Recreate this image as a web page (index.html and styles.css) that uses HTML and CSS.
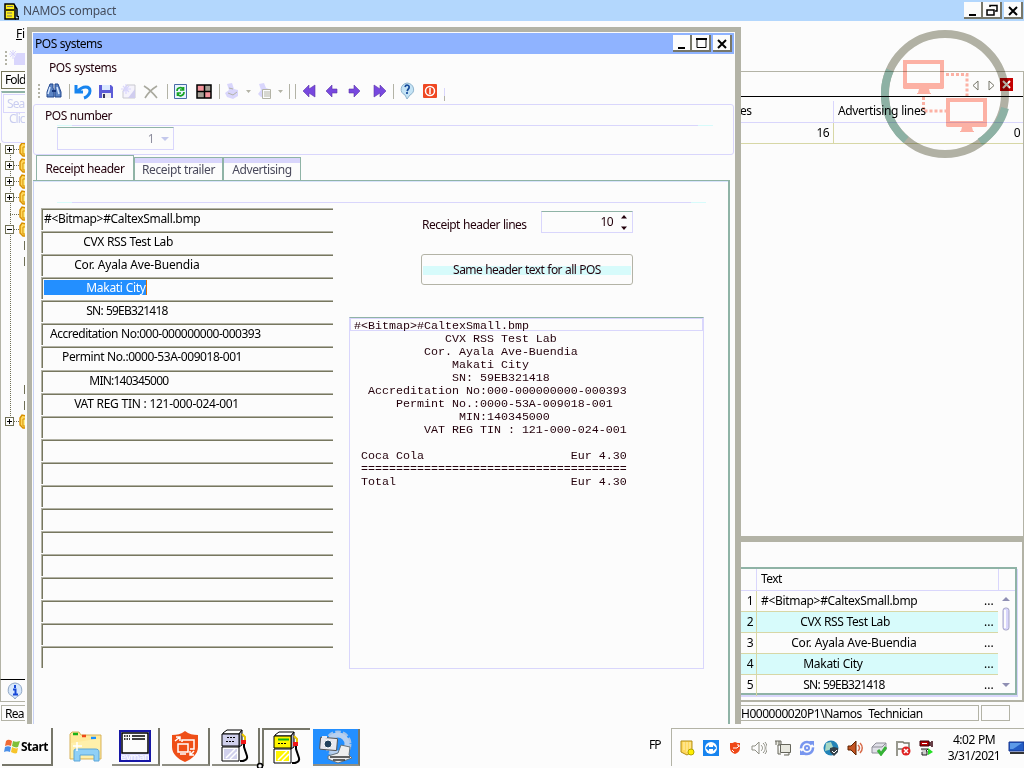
FILE: index.html
```html
<!DOCTYPE html>
<html lang="en">
<head>
<meta charset="utf-8">
<title>NAMOS compact</title>
<link rel="stylesheet" href="styles.css">
</head>
<body>
<svg class="defs" width="0" height="0">
  <defs>
    <g id="min"><path d="M5 13h7" stroke="#000" stroke-width="2"/></g>
    <g id="cls"><path d="M5 5l8 8M13 5l-8 8" stroke="#000" stroke-width="2"/></g>
    <g id="folder"><path d="M7 2 3 1 1 4v7l3 3h3z" fill="#ffd75c" stroke="#d78f00" stroke-width="1.4"/><path d="M7 5H4v7h3" fill="#fff38f" stroke="#d78f00"/></g>
    <g id="pump">
      <path d="M3 4 7 1h15l-3 4H3z" fill="#fff" stroke="#000"/>
      <path d="M19 5l3-4v15l-3 2z" fill="#b3b3c4" stroke="#000"/>
      <path d="M2 5h17v12H2z" stroke="#000"/>
      <path d="M2 18h17v14H2z" fill="#fff" stroke="#000"/>
      <path d="M4 20h13v10H4z"/><path d="M6 29l9-9M10 30l7-7" stroke="#fff" stroke-width="1.500"/>
      <path d="M7 8.500h9M6 12.500h9" stroke="#000" stroke-dasharray="2 1"/>
      <path d="M24 14v4l3 9c1 4-2 4-4 5h-3" fill="none" stroke="#000" stroke-width="2"/>
      <path d="M22 5l3 3v4h-2" fill="none" stroke="#e8c400" stroke-width="2"/>
      <path d="M21 11h5v4h-5z" fill="#ef1717"/>
    </g>
    <g id="monitor"><rect x="2" y="2" width="37" height="23" fill="none" stroke="#ffb3a6" stroke-width="4"/><path d="M0 23h41v5l-1 1H26l1 4h1v1H14v-1h1l1-4H1l-1-1z" fill="#ffb3a6"/></g>
  </defs>
</svg>
<div class="desktop">
  <header class="titlebar">
    <svg width="16" height="18"><path d="M2 2h9l1 2v13H2zM3 8h8" fill="#ffef17" stroke="#000" stroke-width="1.5"/><path d="M12 4l2 3v7l2 1v2h-4" fill="none" stroke="#000" stroke-width="1.5"/><path d="M4 4.500h6M4 11h5M4 14h5" stroke="#777"/></svg>
    <span class="grow app-title">NAMOS compact</span>
    <span class="winbtns">
      <svg class="wb"><use href="#min"/></svg>
      <svg class="wb"><path d="M7 5V3.500h7V9h-2M4 8h7v5H4z" fill="none" stroke="#000" stroke-width="1.500"/></svg>
      <svg class="wb gap"><use href="#cls"/></svg>
    </span>
  </header>

  <main class="workspace">
    <aside class="side">
      <div class="menu"><u>F</u>i</div>
      <div class="sidetool"><svg width="20" height="16"><path d="M1 1v14" stroke="#b3b3a6" stroke-width="2" stroke-dasharray="2 2"/><path d="M12 3h9v12H9V8z" fill="#d9d6fc"/><path d="M8 0v9M4 4h9M5 1l6 6M11 1 5 7" stroke="#d9d6fc"/></svg></div>
      <div class="foldtab">Fold</div>
      <div class="search"><div class="searchbox">Sea</div><div class="searchhint">Clic</div></div>
      <svg class="tree" width="25" height="536">
        <path d="M9.500 10v273M9 71.500h10M13 6.500h6M13 22.500h6M13 38.500h6M13 54.500h6M13 86.500h6M13 278.500h6" fill="none" stroke="#6f6f55" stroke-dasharray="1 1"/>
        <g fill="#fcfcfc" stroke="#6f6f55"><rect x="4.500" y="2.500" width="8" height="8"/><rect x="4.500" y="18.500" width="8" height="8"/><rect x="4.500" y="34.500" width="8" height="8"/><rect x="4.500" y="50.500" width="8" height="8"/><rect x="4.500" y="82.500" width="8" height="8"/><rect x="4.500" y="274.500" width="8" height="8"/></g>
        <path d="M6 6.500h5M8.500 4v5M6 22.500h5M8.500 20v5M6 38.500h5M8.500 36v5M6 54.500h5M8.500 52v5M6 86.500h5M6 278.500h5M8.500 276v5" stroke="#000"/>
        <g transform="translate(18)"><use href="#folder" y="-1"/><use href="#folder" y="15"/><use href="#folder" y="31"/><use href="#folder" y="47"/><use href="#folder" y="63"/><use href="#folder" y="79"/><use href="#folder" y="271"/></g>
        <path d="M23.500 98v9M23.500 114v9M23.500 242v9M23.500 258v9" stroke="#6f6f55"/>
      </svg>
      <div class="info"><svg width="18" height="18"><path d="M9 1a7.500 7 0 0 1 2 13.500L9 17l-2-2.500A7.500 7 0 0 1 9 1z" fill="#d7e8fc" stroke="#8fa6c4"/><path d="M9 3v3M7 7.500h2.500V12M7 12.500h5" stroke="#1748d7" stroke-width="2" fill="none"/></svg></div>
      <div class="ready">Rea</div>
    </aside>
    <section class="right">
      <div class="upper">
        <div class="tabstrip">
          <svg width="44" height="14"><path d="M9 3v9L4 7.500zM20 3v9l5-4.500z" fill="#fcfcfc" stroke="#77776a"/><path d="M31 0h13v13H31z" fill="#c40000"/><path d="M34 3l7 7M41 3l-7 7" stroke="#fff" stroke-width="2"/></svg>
        </div>
        <div class="ghead"><span class="c1">es</span><span class="adv">Advertising lines</span></div>
        <div class="grow1"><span class="c1">16</span><span class="c2">0</span></div>
      </div>
      <div class="lower">
        <div class="textgrid">
          <div class="rows">
            <div class="r h"><span class="n"></span><span class="t">Text</span></div>
            <div class="r"><span class="n">1</span><span class="t wide">#&lt;Bitmap&gt;#CaltexSmall.bmp</span><i>...</i></div>
            <div class="r alt"><span class="n">2</span><span class="t k20">             CVX RSS Test Lab</span><i>...</i></div>
            <div class="r"><span class="n">3</span><span class="t k40">          Cor. Ayala Ave-Buendia</span><i>...</i></div>
            <div class="r alt"><span class="n">4</span><span class="t k30">              Makati City</span><i>...</i></div>
            <div class="r"><span class="n">5</span><span class="t kneg">              SN: 59EB321418</span><i>...</i></div>
          </div>
          <div class="scroll"><div class="sc-top"></div><svg width="16" height="103"><path d="M4 10l4-4 4 4zM4 92h8l-4 4z" fill="#8f8fb3"/><rect x="5" y="17" width="6" height="22" rx="2.500" fill="#d9d6fc" stroke="#a6a6c4"/><path d="M7 19v18" stroke="#fcfcfc" stroke-width="2"/></svg></div>
        </div>
      </div>
      <div class="status"><span class="s1">H000000020P1\Namos&nbsp; Technician</span><span class="s2"></span></div>
    </section>
  </main>

  <footer class="taskbar">
    <div class="start"><svg width="17" height="16"><path d="M2 3c2-2 4-1 6 0L7 8C5 7 3 7 1 8z" fill="#ef6a35"/><path d="M9 3c2 1 4 1 7 0l-2 6c-2 1-4 0-6-1z" fill="#7fbf3a"/><path d="M1 9c2-1 4-1 6 0l-1 5c-2-1-4-1-6 0z" fill="#4a8fe8"/><path d="M8 9c2 1 4 2 6 1l-1 5c-2 1-4 0-6-1z" fill="#f7c52c"/></svg><b>Start</b></div>
    <div class="apps">
      <div class="app"><svg width="34" height="32"><path d="M1 3l2-2h7l2 3h20v24H1z" fill="#ffe99a" stroke="#d7b35c"/><path d="M4 3h5" stroke="#17b317" stroke-width="2.500"/><path d="M13 5h4" stroke="#ef4817" stroke-width="2.500"/><path d="M22 7h5" stroke="#178fff" stroke-width="2.500"/><path d="M2 27V12L27 8h4v19z" fill="#fff0ab"/><path d="M5 30V20c0-2 1-2 3-2h18c3 0 4 1 4 3v9h-5v-6H11v6z" fill="#8fd0f7" stroke="#5ca6d7"/><path d="M4 15h9M8 11v9" stroke="#fff" stroke-width="1.500"/></svg></div>
      <div class="app btn"><svg width="32" height="32"><path d="M1 1h30v30H1z" fill="#d9d9ff" stroke="#1717a6" stroke-width="2"/><path d="M3 3h26v20H3z" fill="#fcfcfc" stroke="#000" stroke-width="1.500"/><path d="M13 6h13M13 9h13" stroke="#000" stroke-width="1.500"/><path d="M5 6h6M5 9h6" stroke="#000" stroke-width="1.500" stroke-dasharray="1.500 1"/><text x="1.500" y="30" class="evman">evman</text></svg></div>
      <div class="app btn"><svg width="28" height="32"><path d="M14 1c4 3 8 4 13 4v12c0 7-6 12-13 15C7 29 1 24 1 17V5c5 0 9-1 13-4z" fill="#ef4f17"/><g fill="none" stroke="#fff" stroke-width="1.500"><path d="M7 14h10v8H7zM9 24h6"/><path d="M11 12v-2h12v9h-4M4 11l5-4M5 7h4v4M23 21l-4 4M19 21v4h4"/></g></svg></div>
      <div class="app btn"><svg width="30" height="34" fill="#d0d0ec"><use href="#pump"/></svg></div>
      <div class="app pressed"><svg width="30" height="34" fill="#fff500"><use href="#pump"/><path d="M6 8.500h11" stroke="#17b317" stroke-width="2"/></svg></div>
      <div class="app btn sel"><svg width="36" height="34"><circle cx="20" cy="14" r="11" fill="none" stroke="#a6c4e8" stroke-width="5" stroke-dasharray="5 2"/><circle cx="20" cy="14" r="9" fill="none" stroke="#b8d0ef" stroke-width="5"/><rect x="2" y="8" width="17" height="12" rx="1" fill="#e8e8ef" stroke="#555" transform="rotate(5 12 15)"/><circle cx="10" cy="14" r="4" fill="#23415c" stroke="#fff"/><path d="M4 6h5v2H4z" fill="#e8e8ef"/><path d="M10 26l10-3 3-8 9 2-1 8 3 3-14 5-10-4z" fill="#eee" stroke="#66737c"/><path d="M12 27h20M15 30h12" stroke="#333" stroke-width="1.500"/></svg></div>
    </div>
    <span class="lang">FP</span>
    <div class="tray">
      <svg width="16" height="16"><path d="M2 1h11v11l-5 3-6-3z" fill="#ffd75c" stroke="#b38f17"/><path d="M5 2v8M8 2v10M11 2v8" stroke="#fff3b3"/><circle cx="12" cy="12" r="3" fill="#ffef00" stroke="#b3a600"/></svg>
      <svg width="16" height="16"><rect width="16" height="16" fill="#1784ef"/><circle cx="8" cy="8" r="6" fill="#fff"/><path d="M2.500 8 6 5v2h4V5l3.500 3-3.500 3V9H6v2z" fill="#1784ef"/></svg>
      <svg width="16" height="16"><path d="M8 2c2 1 3 1 5 1v5c0 3-2 5-5 6-3-1-5-3-5-6V3c2 0 3 0 5-1z" fill="#ef4817"/><path d="M6 8h4l2-2M10 5h2v2M5 10l2 2" stroke="#fff" fill="none"/></svg>
      <svg width="16" height="16" fill="none" stroke="#8f8f84"><path d="M1 6h3l4-4v12l-4-4H1z"/><path d="M10 5c2 2 2 4 0 6M12 3c3 3 3 7 0 10M14 2c3 4 3 8 0 12"/></svg>
      <svg width="16" height="16" fill="#e8e8df" stroke="#66665c"><path d="M5.500 4.500h10v8h-10zM9 15h5v-2M0 1h6v4H3v9h3"/><path d="M1 1v4M4 1v4"/></svg>
      <svg width="16" height="16"><circle cx="8" cy="8" r="6" fill="none" stroke="#7896ef" stroke-width="2.500" stroke-dasharray="15 3"/><circle cx="8" cy="8" r="2" fill="none" stroke="#7896ef" stroke-width="2"/><path d="M10 1h5v5zM6 15H1v-5z" fill="#7896ef"/></svg>
      <svg width="16" height="16"><circle cx="8" cy="8" r="7.500" fill="#2384b8"/><path d="M3 3l5-1 2 5-4 3-4 1z" fill="#a6d7c4"/><path d="M7 8l4-1 4 1v4l-4 4-4-4z" fill="#33414a"/><path d="M9 11l2 2 3-3" stroke="#fff" fill="none"/></svg>
      <svg width="16" height="16"><path d="M1 6h3l5-5v14l-5-5H1z" fill="#c45523" stroke="#5c2300"/><path d="M11 5c2 2 2 4 0 6M13 3c3 3 3 7 0 10" stroke="#d76a48" stroke-width="1.500" fill="none"/></svg>
      <svg width="16" height="16"><path d="M1 7l4-4h10v7l-4 3H1z" fill="#e0e0e8" stroke="#8f8f99"/><path d="M1 7h10l4-4" stroke="#8f8f99" fill="none"/><path d="M7 10l3 4 5-7" stroke="#35b335" stroke-width="3" fill="none"/></svg>
      <svg width="16" height="16"><path d="M2 1v15M3 2h5l1 1h5v8H9L8 9H3" fill="#fcfcfc" stroke="#77776a" stroke-width="1.500"/><circle cx="11" cy="11" r="4.500" fill="#df2323"/><path d="M9 9l4 4M13 9l-4 4" stroke="#fff" stroke-width="1.500"/></svg>
      <svg width="16" height="16"><path d="M1 1h9v5H1z" fill="#b30000" stroke="#35000b"/><path d="M3 3.500h5" stroke="#fff"/><path d="M11 2v4M13 1v6" stroke="#35000b" stroke-width="1.500"/><path d="M2 9h7l-2 2h1v4H3v-3" fill="#ccc" stroke="#222"/><path d="M9 8l5 4-5 3z" fill="#23df23"/></svg>
      <div class="clock"><span>4:02 PM</span><span>3/31/2021</span></div>
      <svg width="16" height="14"><path d="M1 1h15v9H1z" fill="#235cc4" stroke="#17358f"/><path d="M2 2h12L5 8H2z" fill="#5c9ae8"/><path d="M2 12h14" stroke="#333" stroke-width="2"/></svg>
    </div>
  </footer>

  <section class="dialog">
    <div class="dtitle"><span class="grow">POS systems</span>
      <span class="winbtns"><svg class="wb"><use href="#min"/></svg><svg class="wb"><path d="M5 4.500h9v8H5z" fill="none" stroke="#000"/><path d="M4 4h11" stroke="#000" stroke-width="2"/></svg><svg class="wb gap"><use href="#cls"/></svg></span>
    </div>
    <div class="dmenu">POS systems</div>
    <svg class="toolbar" width="420" height="24">
      <path d="M6 3v14" stroke="#b3b3a6" stroke-width="2" stroke-dasharray="2 2"/>
      <g transform="translate(13,3)"><path d="M4 0h3v4l1 2v7H1V8zM9 0h3l3 8v5H9V6z" fill="#5c84c4" stroke="#23488f"/><path d="M4 3 2 10M11 3l2 7" stroke="#d7e8ff" stroke-width="1.500"/><path d="M6 7h4" stroke="#17357a" stroke-width="2"/></g>
      <path d="M36.500 3v15M134.500 3v15M186.500 3v15M256.500 3v15M262.500 3v15M360.500 3v15" stroke="#b3b3a6"/>
      <path d="M43 4v7h7M44 11c6-7 13-6 13-1 0 3-3 6-6 7" fill="none" stroke="#1784ef" stroke-width="3"/>
      <g transform="translate(66,3)"><path d="M0 1h12l2 2v11H0z" fill="#5c5cd7"/><path d="M3 1h8v5H3z" fill="#d9e8ff"/><path d="M3 9h9v5H3z" fill="#eee"/><path d="M5 10v4" stroke="#335" stroke-width="2"/></g>
      <g transform="translate(88,3)"><path d="M6 1h8v13H2V7z" fill="#f5f3fc" stroke="#c9c9d0"/><path d="M7 14h7V5z" fill="#d0cdef"/><path d="M5 0v10M0 5h10M2 2l6 6M8 2 2 8" stroke="#d9d6fc" stroke-width="1.200"/></g>
      <path d="M111 5c5 3 9 7 13 12M124 5c-5 3-9 7-12 12" stroke="#a9a99e" stroke-width="1.600" fill="none"/>
      <g transform="translate(141,3)"><path d="M.5.500h12v14H.5z" fill="#e8f3ff" stroke="#4a6aa6"/><path d="M3 7c0-4 5-4 6-2M9.500 3v3H6M10 8c0 4-5 5-6 2M3.500 12V9H7" fill="none" stroke="#17a323" stroke-width="1.700"/></g>
      <g transform="translate(163,3)"><path d="M1 1h14v13H1z" fill="#f3939b"/><path d="M9 1h6v7H9zM1 8h7v6H1z" fill="#a6a096"/><path d="M1 1h14v13H1zM8.500 1v13M1 7.500h14" stroke="#000" stroke-width="1.500" fill="none"/></g>
      <g fill="#d9d6fc"><path d="M194 3l5-1 2 6 4 1v6l-5 3-6-2-2-4 4-3z"/><path d="M195 12l5 2 4-3M196 7l4 1" stroke="#b3b3a6" fill="none"/></g>
      <path d="M213 9h5l-2.500 3zM245 9h5l-2.500 3z" fill="#b3b3a6"/>
      <path d="M226 3l5-1 2 5 3 1v9l-8-1-3-3 3-4z" fill="#d9d6fc"/><path d="M229.500 8.500h8v9h-8zM231 11h6M231 13h6M231 15h6" fill="#fcfcfc" stroke="#b3b3a6"/>
      <g fill="#7848df" stroke="#5c35a6" stroke-width=".6"><path d="M270 10l6-6v4l6-4v12l-6-4v4z"/><path d="M293 10l6-6v4h5v4h-5v4zM327 10l-6-6v4h-5v4h5v4zM353 10l-6-6v4l-6-4v12l6-4v4z"/></g>
      <path d="M374 2a7.500 6.500 0 0 1 3 12l-3 4-2-4A7.500 6.500 0 0 1 374 2z" fill="#c4e3f5" stroke="#8fb3cc"/><path d="M372 6c1-3 5-2 4 1l-2 3M374 11v2" fill="none" stroke="#174a9a" stroke-width="1.700"/>
      <rect x="390" y="3" width="14" height="14" rx="1" fill="#ef4823"/><circle cx="397" cy="10" r="4.500" fill="none" stroke="#fff" stroke-width="1.500"/><path d="M397 7v6" stroke="#fff" stroke-width="1.500"/>
      <path d="M411.500 7v8" stroke="#d9d6fc"/><path d="M411.500 15v5" stroke="#b3b3a6"/>
    </svg>
    <div class="group"><div class="glabel">POS number</div><div class="gline"></div><div class="combo"><span>1</span><svg width="8" height="4"><path d="M0 0h8L4 4z" fill="#c4c8ec"/></svg></div></div>
    <div class="tabs"><span class="tab on">Receipt header</span><span class="tab">Receipt trailer</span><span class="tab t3">Advertising</span></div>
    <div class="page">
      <div class="pline"></div>
      <div class="cols">
        <div class="fields">
          <div class="f wide">#&lt;Bitmap&gt;#CaltexSmall.bmp</div>
          <div class="f k20">             CVX RSS Test Lab</div>
          <div class="f k40">          Cor. Ayala Ave-Buendia</div>
          <div class="f k30"><span class="hl">              Makati City</span></div>
          <div class="f kneg">              SN: 59EB321418</div>
          <div class="f k12">  Accreditation No:000-000000000-000393</div>
          <div class="f k15">      Permint No.:0000-53A-009018-001</div>
          <div class="f kneg">               MIN:140345000</div>
          <div class="f k35">          VAT REG TIN : 121-000-024-001</div>
          <div class="f"></div><div class="f"></div><div class="f"></div><div class="f"></div><div class="f"></div><div class="f"></div><div class="f"></div><div class="f"></div><div class="f"></div><div class="f"></div><div class="f"></div>
        </div>
        <div class="rightcol">
          <div class="lines"><span>Receipt header lines</span><div class="spin"><span>10</span><svg width="8" height="16"><path d="M1 4.500h6l-3-3.500zM1 12.500h6l-3 3.500z" fill="#23000b"/></svg></div></div>
          <div class="same">Same header text for all POS</div>
          <div class="preview"><div class="p1">#&lt;Bitmap&gt;#CaltexSmall.bmp</div><pre>
             CVX RSS Test Lab
          Cor. Ayala Ave-Buendia
              Makati City
              SN: 59EB321418
  Accreditation No:000-000000000-000393
      Permint No.:0000-53A-009018-001
               MIN:140345000
          VAT REG TIN : 121-000-024-001

 Coca Cola                     Eur 4.30
 ======================================
 Total                         Eur 4.30</pre></div>
        </div>
      </div>
    </div>
  </section>

  <svg class="watermark" width="128" height="128">
    <g fill="none" stroke-width="8"><circle cx="64" cy="64" r="60" stroke="#b3b3a6"/><path d="M9 40A60 60 0 0 0 25 110M124 78A60 60 0 0 1 99 112" stroke="#8fb3a6"/></g>
    <use href="#monitor" x="22" y="30"/><use href="#monitor" x="65" y="68"/>
    <path d="M65 44.500h21v24M42.500 67v14h23" fill="none" stroke="#ffb3a6" stroke-width="3" stroke-dasharray="3 2"/>
  </svg>
  <svg class="pointer" width="8" height="8"><circle cx="4" cy="4" r="2.500" fill="#fff" stroke="#000" stroke-width="1.500"/></svg>
</div>
</body>
</html>
```
FILE: styles.css
```css
* { box-sizing: border-box; }
body { margin: 0; background: #fcfcfc; font: 12px/16px "Noto Sans", "Open Sans", sans-serif; letter-spacing: -0.6px; word-spacing: 0.5px; color: #000; }
svg { display: block; flex: none; }
.defs { position: absolute; }
.desktop { position: relative; width: 1024px; height: 768px; overflow: hidden; display: flex; flex-direction: column; }
.titlebar { height: 21px; flex: none; background: #b3d7fd; display: flex; align-items: center; padding: 0 1px 0 3px; gap: 4px; }
.app-title { color: #444c5c; letter-spacing: -0.2px; padding-top: 1px; }
.grow { flex: 1; }
.winbtns { display: flex; }
.wb { width: 19px; height: 17px; background: #fcfcfc; border-right: 2px solid #77776a; border-bottom: 2px solid #77776a; }
.wb.gap { margin-left: 2px; }

.workspace { flex: 1; display: flex; justify-content: space-between; min-height: 0; }
.side { width: 25px; overflow: hidden; display: flex; flex-direction: column; white-space: nowrap; }
.menu { height: 27px; padding: 5px 0 0 16px; letter-spacing: -0.3px; }
.sidetool { height: 23px; padding: 2px 0 0 5px; }
.foldtab { height: 18px; border: 1px solid #77775c; border-right: 0; padding: 0 0 0 3px; margin-left: 1px; letter-spacing: -0.9px; }
.search { height: 52px; margin: 2px 0 0 1px; border: 1px solid #d9d6fc; border-right: 0; border-top: 2px solid #8fb3a6; color: #c9cdf0; padding: 1px 0 0 1px; border-bottom-left-radius: 4px; }
.searchbox { border: 1px solid #d9d6fc; border-right: 0; height: 19px; padding-left: 3px; line-height: 18px; letter-spacing: -0.9px; }
.searchhint { padding-left: 6px; line-height: 12px; letter-spacing: -1px; }
.tree { border-left: 1px solid #b3b3a6; }
.info { flex: 1; border-top: 1px solid #000; border-bottom: 1px solid #b3b3a6; border-left: 1px solid #b3b3a6; padding: 2px 0 0 5px; }
.ready { height: 16px; border: 1px solid #b3b3a6; border-right: 0; margin: 3px 0 3px 1px; padding-left: 3px; line-height: 15px; letter-spacing: -0.8px; }

.right { width: 284px; display: flex; flex-direction: column; }
.upper { margin-top: 50px; height: 465px; border-top: 1px solid #b3b3a6; border-right: 1px solid #b3b3a6; }
.tabstrip { height: 25px; border-bottom: 1px solid #000; display: flex; justify-content: flex-end; padding: 6px 10px 0 0; }
.ghead, .grow1 { display: flex; height: 26px; border-bottom: 1px solid #d9d6fc; padding-top: 4px; line-height: 19px; }
.ghead .c1, .grow1 .c1 { width: 94px; border-right: 1px solid #d9d6fc; margin-right: 3px; }
.adv { letter-spacing: -0.35px; padding-left: 1px; }
.grow1 { height: 21px; border-color: #d7d7a6; padding-top: 0; }
.grow1 .c1 { text-align: right; border-color: #d7d7a6; padding-right: 4px; }
.grow1 .c2 { flex: 1; text-align: right; padding-right: 3px; }
.lower { height: 166px; border-top: 6px solid #b3b3a6; border-bottom: 2px solid #b3b3a6; border-right: 2px solid #b3b3a6; padding: 25px 5px 0 0; }
.textgrid { height: 128px; border: 2px solid #8fb3a6; border-left: 0; box-shadow: 1px 2px 0 #d9d6fc; display: flex; }
.rows { width: 258px; }
.r { display: flex; height: 21px; line-height: 20px; border-bottom: 1px solid #d7d7a6; white-space: pre; }
.r:last-child { border-bottom: 0; }
.r.h { height: 22px; border-color: #d9d6fc; border-right: 1px solid #d9d6fc; width: 259px; }
.r.h .n { border-color: #d9d6fc; }
.r.alt { background: #d7fbfb; }
.n { width: 17px; border-right: 1px solid #d7d7a6; text-align: right; padding-right: 3px; }
.t { flex: 1; padding-left: 4px; }
.r i { font-style: normal; width: 14px; letter-spacing: 0; word-spacing: 0; }
.wide { letter-spacing: -0.32px; }
/* Looser or tighter rows; word spacing compensates so the indent columns stay 3px wide. */
.k12 { letter-spacing: -0.49px; word-spacing: 0.39px; }
.k15 { letter-spacing: -0.44px; word-spacing: 0.34px; }
.k20 { letter-spacing: -0.38px; word-spacing: 0.28px; }
.k30 { letter-spacing: -0.3px; word-spacing: 0.2px; }
.k35 { letter-spacing: -0.3px; word-spacing: 0.2px; }
.k40 { letter-spacing: -0.16px; word-spacing: 0.06px; }
.kneg { letter-spacing: -0.77px; word-spacing: 0.67px; }
.sc-top { height: 22px; border-bottom: 1px solid #d9d6fc; width: 17px; }
.status { height: 22px; display: flex; gap: 2px; padding: 3px 0 3px; }
.s1 { width: 239px; border: 1px solid #b3b3a6; border-left: 0; line-height: 15px; padding-left: 1px; letter-spacing: -0.47px; }
.s2 { width: 29px; border: 1px solid #b3b3a6; }

.taskbar { height: 44px; flex: none; display: flex; align-items: flex-start; }
.start { width: 51px; height: 38px; margin: 4px 0 0 2px; border-right: 2px solid #77776a; border-bottom: 2px solid #77776a; display: flex; align-items: center; padding-left: 2px; letter-spacing: -0.5px; }
.start b { padding-top: 2px; }
.apps { display: flex; gap: 2px; margin: 4px 0 0 9px; flex: 1; }
.app { width: 48px; height: 38px; display: flex; align-items: center; justify-content: center; }
.app.btn { border-right: 2px solid #77776a; border-bottom: 2px solid #8f8f84; }
.app.pressed { border-left: 2px solid #77776a; border-top: 2px solid #77776a; }
.app.sel { background: #238fff; background-clip: padding-box; margin: 1px 0 0 1px; height: 37px; width: 47px; }
.evman { font: 9px "DejaVu Sans", sans-serif; letter-spacing: -0.4px; word-spacing: 0; fill: #fff; }
.lang { width: 19px; margin: 13px 0 0; height: 22px; letter-spacing: -0.9px; }
.tray { margin-left: 3px; width: 353px; height: 38px; margin-top: 4px; border-top: 1px solid #b3b3a6; border-left: 1px solid #b3b3a6; display: flex; align-items: center; gap: 8px; padding-left: 7px; }
.clock { display: flex; flex-direction: column; align-items: center; width: 56px; margin-left: 1px; letter-spacing: -0.5px; position: relative; left: 2px; white-space: nowrap; }

.dialog { position: absolute; left: 27px; top: 27px; width: 714px; height: 697px; background: #fcfcfc; border: solid #b3b3a6; border-width: 5px 6px 0 5px; box-shadow: 1px -1px 0 -1px #77776a; padding: 1px 1px 0 1px; display: flex; flex-direction: column; color: #23000b; }
.dtitle { height: 21px; background: #8fb3ff; display: flex; align-items: center; padding: 0 2px 0 2px; color: #000; letter-spacing: -0.5px; }
.dmenu { height: 27px; padding: 6px 0 0 16px; letter-spacing: -0.45px; }
.toolbar { height: 23px; }
.group { height: 51px; border: 1px solid #d9d6fc; border-radius: 3px; }
.glabel { padding: 3px 0 0 11px; height: 20px; letter-spacing: -0.5px; }
.gline, .pline { height: 1px; margin-right: 20px; margin-left: 23px; background: linear-gradient(90deg, #d7fbfb 15px, #d9d6fc 15px, #d9d6fc calc(100% - 15px), #d7fbfb calc(100% - 15px)); }
.combo { width: 117px; height: 23px; margin: 1px 0 0 23px; border: 1px solid #d9d6fc; border-top-color: #8fb3a6; display: flex; justify-content: flex-end; align-items: center; gap: 7px; padding-right: 4px; color: #8f8f9e; }
.tabs { display: flex; align-items: flex-end; height: 25px; padding-left: 3px; }
.tab { height: 23px; border: 1px solid #8fb3a6; border-bottom: 0; padding: 4px 0 0; width: 89px; text-align: center; color: #4a4a5c; box-shadow: inset 0 5px 0 #d9d6fc; letter-spacing: -0.4px; }
.tab.on { width: 98px; height: 26px; color: #23000b; box-shadow: none; background: #fcfcfc; margin-bottom: -1px; padding-top: 5px; letter-spacing: -0.45px; }
.t3 { width: 78px; }
.page { flex: 1; margin-right: 4px; border: solid #8fb3a6; border-width: 1px 2px 0 0; box-shadow: inset 1px 0 0 #c9d3f5, inset 0 1px 0 #d9e3fc; }
.pline { margin: 21px 22px 0 24px; }
.cols { display: flex; gap: 16px; padding: 5px 0 0 8px; }
.fields { width: 292px; display: grid; grid-auto-rows: 22px; row-gap: 1.080px; white-space: pre; color: #000; }
.f { border-top: 1px solid #b3b3a6; border-left: 1px solid #b3b3a6; line-height: 18px; padding: 1px 0 0 2px; box-shadow: inset 1px 1px 0 #77775f; }
.hl { background: #238fff; color: #fff; border-right: 1px solid #df7000; display: inline-block; height: 15px; line-height: 16px; margin-top: 1px; }
.rightcol { width: 355px; }
.lines { display: flex; align-items: center; height: 23px; margin: 2px 0 0 73px; }
.lines > span { width: 119px; padding-top: 7px; letter-spacing: -0.52px; }
.spin { width: 92px; height: 22px; border: 1px solid #d9d6fc; border-top-color: #8fb3a6; display: flex; align-items: center; justify-content: flex-end; gap: 7px; padding-right: 4px; }
.same { margin: 21px 0 0 72px; width: 212px; height: 31px; border: 1px solid #b3b3a6; border-radius: 3px; text-align: center; line-height: 30px; letter-spacing: -0.56px; background: linear-gradient(#fcfcfc 11px, #d7fbfb 11px, #d7fbfb 20px, #fcfcfc 20px); background-size: 208px 29px; background-position: 1px 0; background-repeat: no-repeat; }
.preview { margin-top: 32px; height: 352px; border: 1px solid #d9d6fc; border-top-color: #8fb3a6; font: 11.667px/13px "Liberation Mono", monospace; letter-spacing: 0; word-spacing: 0; }
.p1 { height: 13px; border: 1px solid #d9d6fc; line-height: 14px; padding-left: 3px; }
.preview pre { margin: 2px 0 0; font: inherit; padding-left: 4px; }

.watermark { position: absolute; left: 881px; top: 30px; mix-blend-mode: multiply; }
.pointer { position: absolute; left: 256px; top: 762px; }
```
